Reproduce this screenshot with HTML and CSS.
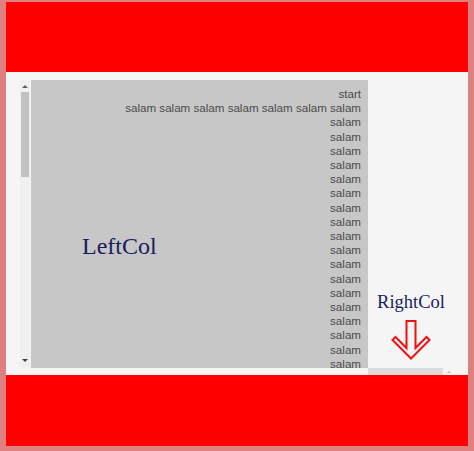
FILE: index.html
```html
<!DOCTYPE html>
<html>
<head>
<meta charset="utf-8">
<link rel="stylesheet" href="styles.css">
</head>
<body>
<div class="frame">
  <div class="band"></div>
  <div class="middle">
    <div class="lefthalf">
      <div class="vscroll">
        <div class="arrow-up"></div>
        <div class="thumb"></div>
        <div class="track"></div>
        <div class="arrow-down"></div>
      </div>
      <div class="greybox">
        <div class="leftcol">LeftCol</div>
        <div class="lines">
          start<br>
          salam salam salam salam salam salam salam<br>
          salam<br>salam<br>salam<br>salam<br>salam<br>salam<br>
          salam<br>salam<br>salam<br>salam<br>salam<br>salam<br>
          salam<br>salam<br>salam<br>salam<br>salam<br>salam
        </div>
      </div>
    </div>
    <div class="rightcol">
      <div class="rightlabel">RightCol</div>
      <svg class="downarrow" width="40" height="40" viewBox="0 0 40 40">
        <polygon points="15.5,1 24.5,1 24.5,28 35.5,17 38.5,20 20,38.5 1.5,20 4.5,17 15.5,28" fill="none" stroke="#ee1111" stroke-width="2" stroke-linejoin="miter"/>
      </svg>
      <div class="hscroll">
        <div class="hbar"></div>
        <div class="harrow"></div>
      </div>
    </div>
  </div>
  <div class="band bottom"></div>
</div>
</body>
</html>
```
FILE: styles.css
```css
html, body {
  margin: 0;
  padding: 0;
}
body {
  background: #de7f80;
  width: 474px;
  height: 451px;
  overflow: hidden;
}
.frame {
  margin: 2px 6px 0 6px;
  width: 462px;
}
.band {
  height: 70px;
  background: #ff0000;
}
.band.bottom {
  height: 71px;
}
.middle {
  height: 303px;
  background: #f5f5f6;
  display: flex;
}
.lefthalf {
  display: flex;
  padding: 8px 0 7px 14px;
}
.vscroll {
  width: 10px;
  height: 288px;
  background: #f0f0f0;
  display: flex;
  flex-direction: column;
  align-items: center;
  margin-right: 1px;
}
.arrow-up {
  width: 0;
  height: 0;
  border-left: 3px solid transparent;
  border-right: 3px solid transparent;
  border-bottom: 3px solid #606060;
  margin-top: 5px;
  margin-bottom: 4px;
}
.thumb {
  width: 8px;
  height: 85px;
  background: #c1c1c1;
}
.track {
  flex: 1;
}
.arrow-down {
  width: 0;
  height: 0;
  border-left: 3px solid transparent;
  border-right: 3px solid transparent;
  border-top: 3px solid #404040;
  margin-bottom: 6px;
}
.greybox {
  width: 337px;
  height: 288px;
  background: #c8c7c8;
  display: grid;
  grid-template-columns: 337px;
  grid-template-rows: 288px;
  overflow: hidden;
}
.leftcol {
  grid-area: 1 / 1;
  align-self: start;
  justify-self: start;
  font-family: "Liberation Serif", "Times New Roman", serif;
  font-size: 24px;
  line-height: 28px;
  color: #1b1b5c;
  margin: 152px 0 0 51px;
  white-space: nowrap;
}
.lines {
  grid-area: 1 / 1;
  align-self: start;
  text-align: right;
  font-family: "Liberation Sans", Arial, sans-serif;
  font-size: 11.6px;
  line-height: 14.2px;
  color: #4a4a4a;
  padding: 7px 7px 0 0;
  white-space: nowrap;
}
.rightcol {
  width: 100px;
  display: flex;
  flex-direction: column;
  justify-content: flex-end;
  align-items: stretch;
}
.rightlabel {
  font-family: "Liberation Serif", "Times New Roman", serif;
  font-size: 18.5px;
  line-height: 21px;
  color: #1b1b5c;
  text-align: center;
  padding-right: 14px;
  margin-bottom: 7px;
}
.downarrow {
  display: block;
  margin: 0 0 8px 23px;
}
.hscroll {
  height: 7px;
  display: flex;
  align-items: center;
}
.hbar {
  width: 75px;
  height: 7px;
  background: #dcdcdc;
}
.harrow {
  width: 0;
  height: 0;
  margin-left: 4px;
  border-left: 2px solid transparent;
  border-right: 2px solid transparent;
  border-bottom: 2px solid #b8b8b8;
}
```
